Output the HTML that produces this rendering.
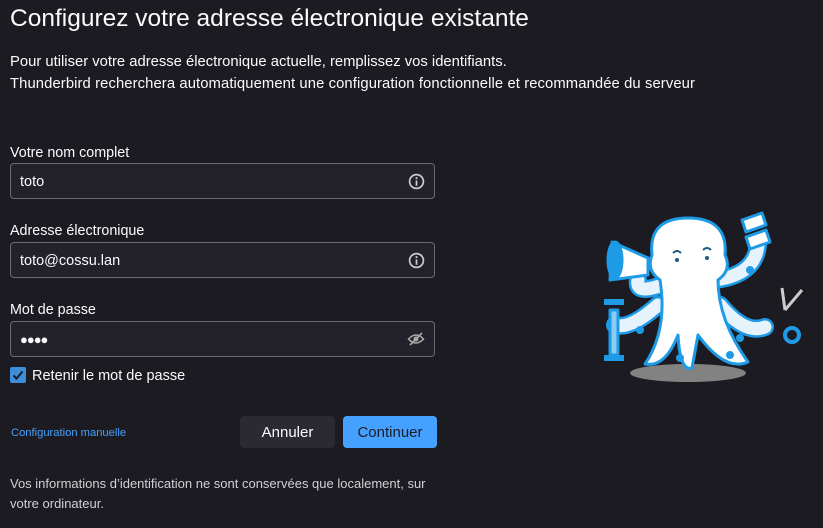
<!DOCTYPE html>
<html><head><meta charset="utf-8"><style>
*{box-sizing:border-box;margin:0;padding:0}
body{width:823px;height:528px;background:#1c1b22;color:#fbfbfe;font-family:"Liberation Sans",sans-serif;position:relative;overflow:hidden}
.a{position:absolute;white-space:nowrap}
.inp{position:absolute;left:10px;width:425px;height:36px;background:#23222b;border:1px solid #6a6a73;border-radius:4px;font-size:14.5px;padding:0 0 0 9px;line-height:36px}
.lbl{font-size:14.3px}
.ic{position:absolute;right:9px;top:9px}
</style></head><body>
<div class="a" style="left:10px;top:5px;font-size:24.5px">Configurez votre adresse électronique existante</div>
<div class="a" style="left:10px;top:54px;font-size:14.8px">Pour utiliser votre adresse électronique actuelle, remplissez vos identifiants.</div>
<div class="a" style="left:10px;top:76px;font-size:14.8px;letter-spacing:0.1px">Thunderbird recherchera automatiquement une configuration fonctionnelle et recommandée du serveur</div>

<div class="a lbl" style="left:10px;top:145px">Votre nom complet</div>
<div class="inp" style="top:163px">toto<svg class="ic" width="17" height="17" viewBox="0 0 16 16"><circle cx="8" cy="8" r="6.5" fill="none" stroke="#ccc" stroke-width="1.6"/><rect x="7.2" y="7" width="1.6" height="5" fill="#ccc"/><circle cx="8" cy="4.8" r="1" fill="#ccc"/></svg></div>
<div class="a lbl" style="left:10px;top:223px">Adresse électronique</div>
<div class="inp" style="top:242px">toto@cossu.lan<svg class="ic" width="17" height="17" viewBox="0 0 16 16"><circle cx="8" cy="8" r="6.5" fill="none" stroke="#ccc" stroke-width="1.6"/><rect x="7.2" y="7" width="1.6" height="5" fill="#ccc"/><circle cx="8" cy="4.8" r="1" fill="#ccc"/></svg></div>
<div class="a lbl" style="left:10px;top:302px">Mot de passe</div>
<div class="inp" style="top:321px;font-size:13px;letter-spacing:-1px">●●●●<svg class="ic" width="18" height="16" viewBox="0 0 18 16"><path d="M1.5 8Q9 0 16.5 8Q9 16 1.5 8Z" fill="none" stroke="#aaa" stroke-width="1.6"/><circle cx="9" cy="8" r="2.5" fill="#aaa"/><path d="M15 2L3 14" stroke="#aaa" stroke-width="1.6"/></svg></div>

<div class="a" style="left:10px;top:367px;width:16px;height:16px;background:#3d8ed8;border-radius:2px"><svg width="16" height="16"><path d="M3.5 8.5L6.5 11.5L12.5 4.5" fill="none" stroke="#1c1b22" stroke-width="2"/></svg></div>
<div class="a" style="left:32px;top:368px;font-size:14.5px">Retenir le mot de passe</div>

<div class="a" style="left:11px;top:427px;font-size:11.2px;color:#45a1ff">Configuration manuelle</div>
<div class="a" style="left:240px;top:416px;width:95px;height:32px;background:#2b2a33;border-radius:4px;font-size:15px;text-align:center;line-height:34px">Annuler</div>
<div class="a" style="left:343px;top:416px;width:94px;height:32px;background:#45a1ff;border-radius:4px;font-size:15px;text-align:center;line-height:34px;color:#1c1b22">Continuer</div>

<div class="a" style="left:10px;top:474px;font-size:13px;color:#d0d0d5;line-height:20px;white-space:normal;width:432px">Vos informations d’identification ne sont conservées que localement, sur<br>votre ordinateur.</div>

<svg class="a" style="left:580px;top:180px" width="240" height="210" viewBox="0 0 240 210">
<ellipse cx="108" cy="193" rx="58" ry="9" fill="#828282"/>
<g stroke-linecap="round" fill="none">
<path d="M78 125Q50 150 35 145" stroke="#1e9be6" stroke-width="18"/>
<path d="M78 125Q50 150 35 145" stroke="#e6f3fc" stroke-width="13"/>
<path d="M140 125Q165 155 185 147" stroke="#1e9be6" stroke-width="18"/>
<path d="M140 125Q165 155 185 147" stroke="#e6f3fc" stroke-width="13"/>
<path d="M135 100Q175 95 178 65" stroke="#1e9be6" stroke-width="18"/>
<path d="M135 100Q175 95 178 65" stroke="#e6f3fc" stroke-width="13"/>
<path d="M82 105Q55 115 58 100" stroke="#1e9be6" stroke-width="18"/>
<path d="M82 105Q55 115 58 100" stroke="#e6f3fc" stroke-width="13"/>
</g>
<g stroke="#1e9be6" stroke-width="3" fill="#fff" stroke-linejoin="round">
<path d="M108 38Q148 38 145 75Q152 90 138 100Q138 140 168 182Q145 192 118 155L112 188Q100 192 98 155Q85 188 65 184Q88 150 80 100Q66 90 72 75Q68 38 108 38Z"/>
<path d="M68 78L32 62L30 100L68 95Z"/>
<ellipse cx="35" cy="80" rx="7" ry="18" fill="#1e9be6"/>
<path d="M162 40L182 33L186 45L166 52ZM166 57L186 50L190 62L170 69Z"/>
<path d="M30 130L38 130L38 175L30 175Z" fill="#8ccbf2"/>
<path d="M24 122h20M24 178h20" stroke-width="6"/>
<path d="M205 130L222 110M205 130L202 108" stroke="#ccc"/>
<circle cx="212" cy="155" r="7" fill="none" stroke-width="4"/>
</g>
<g fill="#1e9be6"><circle cx="60" cy="150" r="4"/><circle cx="160" cy="158" r="4"/><circle cx="170" cy="90" r="4"/><circle cx="100" cy="178" r="4"/><circle cx="150" cy="175" r="4"/></g>
<path d="M93 73q4-4 8 0M123 70q4-4 8 0" fill="none" stroke="#1e5a80" stroke-width="2"/>
<circle cx="97" cy="80" r="2" fill="#1e5a80"/><circle cx="127" cy="78" r="2" fill="#1e5a80"/>
</svg>
</body></html>
